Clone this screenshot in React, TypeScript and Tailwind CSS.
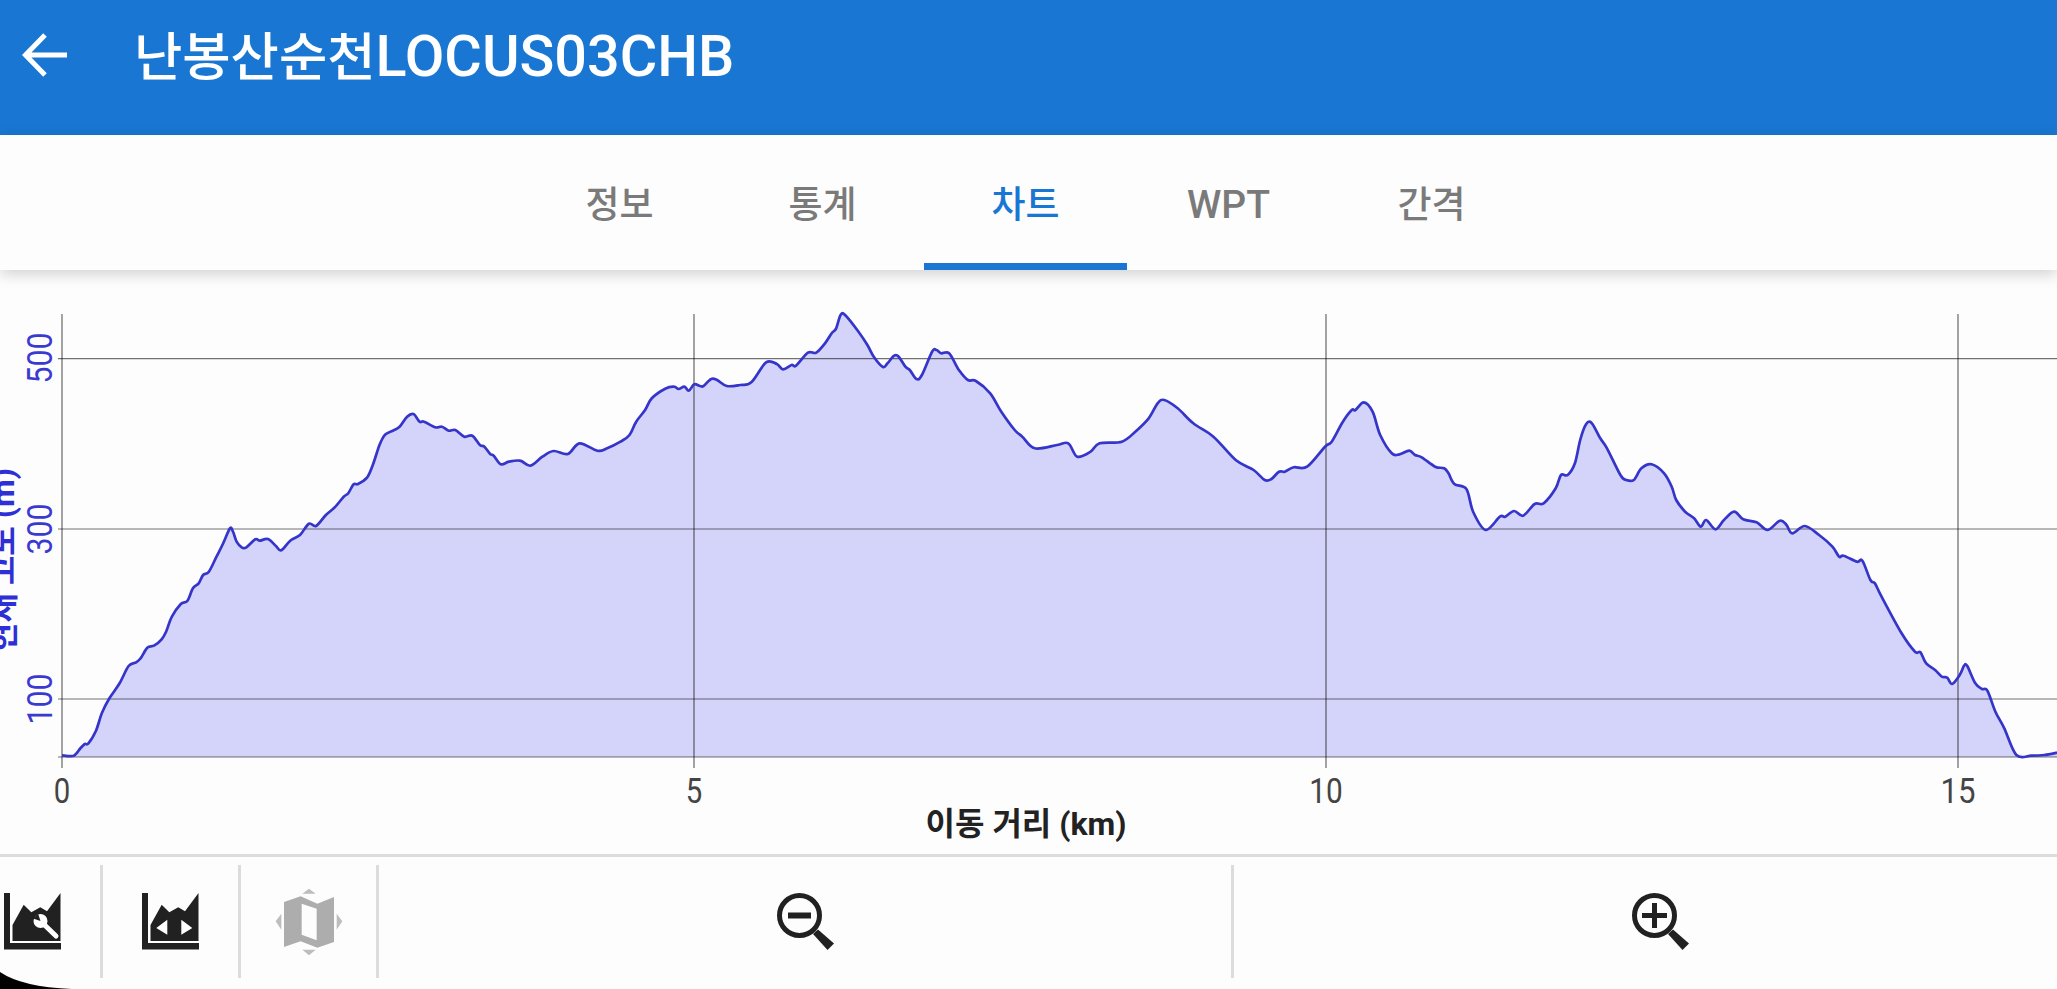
import { useMemo } from 'react'

// elevation trace, sampled in three overlapping strips of the chart
const stripA = [139,1366,165,1367,180,1345,190,1332,198,1330,215,1292,228,1240,245,1195,268,1150,288,1098,305,1087,315,1075,330,1043,345,1037,362,1018,372,995,385,950,405,912,420,902,432,865,445,850,455,825,468,815,485,770,500,730,515,685,522,695,530,725,542,743,552,742,572,718,582,722,600,717,618,738,630,751,650,722,672,705,692,671,708,678,730,645,750,622,770,590,780,580,792,553,802,552,822,533,835,495,850,435,862,405,875,395,895,380,912,350,926,342,940,365,950,365,975,382,990,380,1005,392,1020,390,1040,410,1058,407,1075,435,1085,440,1098,462,1106,467,1122,493,1140,485,1165,482,1188,497,1215,470,1240,453,1272,462,1298,430,1338,452,1360,445,1390,425,1410,405,1425,365,1445,330,1460,295,1490,266,1510,260,1520,267,1533,260,1543,272,1555,253,1568,258]
const stripB = [8,258,25,237,38,240,60,258,90,255,115,247,148,187,172,192,186,208,205,195,215,197,242,158,260,158,280,130,295,100,305,85,315,45,325,45,355,95,375,135,390,172,410,201,420,190,435,167,445,170,460,200,470,210,485,237,497,225,520,155,530,150,540,160,558,160,580,210,600,240,618,243,650,280,675,335,705,390,722,410,750,445,800,435,825,430,845,470,875,455,895,430,945,425,975,395,1005,355,1025,310,1040,300,1070,325,1105,370,1150,410,1200,480,1240,510,1265,540,1280,537,1297,515,1310,515,1330,502,1360,500,1400,440,1415,425,1440,365,1460,330,1468,330,1487,307]
const stripC = [35,335,52,405,78,460,95,463,117,452,130,465,145,472,175,500,195,505,205,520,218,552,245,567,260,635,288,690,320,650,332,650,352,633,372,647,398,612,418,610,445,565,457,525,472,525,488,490,500,420,512,375,525,368,545,415,560,445,590,525,603,540,620,540,637,505,660,493,688,520,705,560,715,600,735,635,755,655,770,680,782,660,803,688,822,660,845,635,865,658,895,667,920,690,947,662,962,675,975,700,1003,678,1035,705,1065,740,1080,770,1090,767,1120,785,1132,782,1150,840,1160,850,1175,890,1220,1000,1250,1055,1262,1057,1275,1090,1295,1110,1310,1130,1322,1133,1333,1152,1350,1125,1360,1097,1367,1098,1385,1150,1400,1167,1412,1172,1430,1235,1450,1285,1477,1365,1510,1367,1540,1365,1568,1358]

type Pt = [number, number]

function toPoints(strip: number[], offset: number) {
    const out: Pt[] = []
    for (let i = 0; i < strip.length; i += 2) {
        out.push([offset + strip[i] / 2.24, 300 + strip[i + 1] / 3])
    }
    return out
}

// catmull-rom through the samples so the line doesn't look like straight segments
function smoothPath(pts: Pt[]) {
    let d = `M${pts[0][0].toFixed(1)} ${pts[0][1].toFixed(1)}`
    for (let i = 0; i < pts.length - 1; i++) {
        const p0 = pts[Math.max(i - 1, 0)]
        const p1 = pts[i]
        const p2 = pts[i + 1]
        const p3 = pts[Math.min(i + 2, pts.length - 1)]
        const c1x = p1[0] + (p2[0] - p0[0]) / 6
        const c1y = p1[1] + (p2[1] - p0[1]) / 6
        const c2x = p2[0] - (p3[0] - p1[0]) / 6
        const c2y = p2[1] - (p3[1] - p1[1]) / 6
        d += `C${c1x.toFixed(1)} ${c1y.toFixed(1)} ${c2x.toFixed(1)} ${c2y.toFixed(1)} ${p2[0].toFixed(1)} ${p2[1].toFixed(1)}`
    }
    return d
}

const gridY = [358.7, 529, 699, 757]
const gridX = [62, 694, 1326, 1958]

const yLabels: [string, number][] = [['500', 358], ['300', 529], ['100', 699]]
const xLabels: [string, number, number][] = [['0', 62, 16.5], ['5', 694, 16.5], ['10', 1326, 33.5], ['15', 1958, 35]]

function ElevationChart() {
    const line = useMemo(
        () => smoothPath([...toPoints(stripA, 0), ...toPoints(stripB, 700), ...toPoints(stripC, 1357)]),
        []
    )
    return (
        <svg viewBox="0 270 2057 584" className="block w-full h-full" style={{ fontFamily: 'Roboto, "Noto Sans CJK KR", sans-serif' }}>
            <path d={`${line}L2057 757L62 757Z`} fill="#d4d4fb" />
            {gridY.map((y) => (
                <line key={y} x1="58" x2="2057" y1={y} y2={y} stroke="#000" strokeOpacity="0.55" strokeWidth="1.2" />
            ))}
            {gridX.map((x) => (
                <line key={x} x1={x} x2={x} y1="314" y2="768" stroke="#000" strokeOpacity="0.6" strokeWidth="1.2" />
            ))}
            <path d={line} fill="none" stroke="#3535c9" strokeWidth="2.7" strokeLinejoin="round" />

            {yLabels.map(([t, y]) => (
                <text key={t} transform={`translate(52 ${y}) rotate(-90)`} textAnchor="middle" fontSize="35" textLength="51" lengthAdjust="spacingAndGlyphs" fill="#3a3ad0" fontWeight="400">{t}</text>
            ))}
            <text transform="translate(14 560) rotate(-90)" textAnchor="middle" fontSize="32" fontWeight="700" fill="#2f2fd6">현재 고도 (m)</text>

            {xLabels.map(([t, x, w]) => (
                <text key={t} x={x} y="803" textAnchor="middle" fontSize="35" textLength={w} lengthAdjust="spacingAndGlyphs" fill="#444" fontWeight="400">{t}</text>
            ))}
            <text x="1026" y="835" textAnchor="middle" fontSize="32" fontWeight="700" fill="#222">이동 거리 (km)</text>
        </svg>
    )
}

function ChartBase({ children }: { children?: React.ReactNode }) {
    return (
        <svg width="57" height="57" viewBox="0 0 57 57">
            <path d="M0 0h6v50h51v6.500H0z" fill="#212121" />
            <path d="M8.500 48V32L19.700 11.700 27.300 19.300 36.300 14.300 43 18.300 56.500 0V48z" fill="#212121" />
            {children}
        </svg>
    )
}

function MapMoveIcon() {
    return (
        <svg width="70" height="70" viewBox="820 140 210 210">
            <path fill="#adadad" fillRule="evenodd" d="M850 185 900 168 950 190 1000 170V305L950 322 900 303 850 320zM903 190V283L948 300V205z" />
            <path fill="#bdbdbd" d="M925 145 905 160H945zM925 345 905 328H945zM825 243 842 220V268zM1025 243 1008 220V268z" />
        </svg>
    )
}

function ZoomIcon({ plus }: { plus?: boolean }) {
    return (
        <svg width="57" height="57" viewBox="0 0 57 57" fill="#212121">
            <circle cx="22.500" cy="22.500" r="20" fill="none" stroke="#212121" strokeWidth="5" />
            <path d="M36 41 41 36.500 57 50.500 50.500 57z" />
            {plus ? <path d="M20 10h5v10h10v5H25v10h-5V25H10v-5h10z" /> : <path d="M11 19.500h23v6H11z" />}
        </svg>
    )
}

function Divider() {
    return <div className="w-[3px] self-start mt-[8px] h-[113px] bg-[#dcdcdc] shrink-0" />
}

function Cell({ children, grow }: { children: React.ReactNode; grow?: boolean }) {
    return <div className={grow ? 'flex-1 flex items-center justify-center pb-[3px]' : 'w-[135px] shrink-0 flex items-center justify-center pb-[3px]'}>{children}</div>
}

const tabs = ['정보', '통계', '차트', 'WPT', '간격']

export default function App() {
    return (
        <div className="relative flex flex-col h-screen overflow-hidden bg-[#fdfdfd]" style={{ fontFamily: 'Roboto, "Noto Sans CJK KR", sans-serif' }}>
            <header className="h-[135px] shrink-0 bg-[#1976d2] flex items-start pt-[33px] pl-[22px] text-white">
                <svg width="46" height="44" viewBox="0 0 46 44" fill="none" stroke="#fff" strokeWidth="5">
                    <path d="M45 22H4M23 2 3.500 22 23 42" />
                </svg>
                <h1 className="ml-[66px] leading-[48px] font-medium whitespace-nowrap">
                    <span className="text-[52.500px]">난봉산순천</span>
                    <span className="text-[57.500px]">LOCUS03CHB</span>
                </h1>
            </header>

            <nav className="relative z-10 h-[135px] shrink-0 bg-[#fdfdfd] flex justify-center pr-[6px] shadow-[0_4px_14px_rgba(0,0,0,0.18)]">
                {tabs.map((t) => (
                    <div
                        key={t}
                        className={
                            t === '차트'
                                ? 'w-[203px] flex items-center justify-center pt-[13px] text-[37px] font-medium text-[#1976d2] border-b-[7px] border-[#1976d2]'
                                : t === 'WPT'
                                  ? 'w-[203px] flex items-center justify-center pt-[6px] text-[39px] font-medium text-[#7a7a7a]'
                                  : 'w-[203px] flex items-center justify-center pt-[6px] text-[37px] font-medium text-[#7a7a7a]'
                        }
                    >
                        {t}
                    </div>
                ))}
            </nav>

            <main className="h-[584px] shrink-0">
                <ElevationChart />
            </main>

            <div className="h-[3px] shrink-0 bg-[#dcdcdc]" />
            <div className="flex-1 flex -ml-[35px] -mr-[29px]">
                <Cell>
                    <ChartBase>
                        <circle cx="36.500" cy="28" r="7" fill="#fff" />
                        <path d="M39 30.500 52 43" stroke="#fff" strokeWidth="5" strokeLinecap="round" />
                        <path d="M36.500 28 29 25.500 34 20.500z" fill="#212121" />
                    </ChartBase>
                </Cell>
                <Divider />
                <Cell>
                    <ChartBase>
                        <path d="M14.300 35 25.300 26.700V41.700zM50.300 35 39.300 26.700V41.700z" fill="#fff" />
                    </ChartBase>
                </Cell>
                <Divider />
                <Cell>
                    <MapMoveIcon />
                </Cell>
                <Divider />
                <Cell grow>
                    <ZoomIcon />
                </Cell>
                <Divider />
                <Cell grow>
                    <ZoomIcon plus />
                </Cell>
            </div>

            {/* rounded screen corner */}
            <svg className="absolute left-0 bottom-0" width="72" height="17" viewBox="0 0 72 17">
                <path d="M0 0Q22 15 72 17H0z" fill="#000" />
            </svg>
        </div>
    )
}
